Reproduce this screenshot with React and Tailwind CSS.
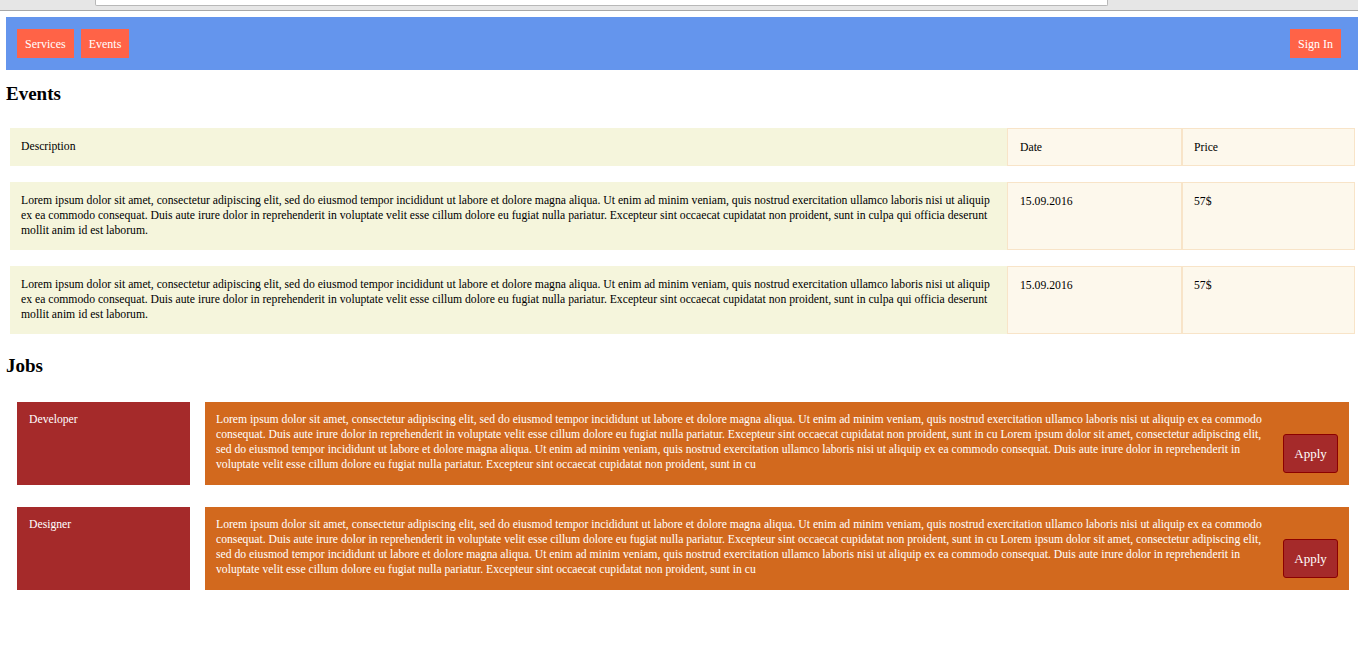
import React from 'react';

const LOREM =
    'Lorem ipsum dolor sit amet, consectetur adipiscing elit, sed do eiusmod tempor incididunt ut labore et dolore magna aliqua. Ut enim ad minim veniam, quis nostrud exercitation ullamco laboris nisi ut aliquip ex ea commodo consequat. Duis aute irure dolor in reprehenderit in voluptate velit esse cillum dolore eu fugiat nulla pariatur. Excepteur sint occaecat cupidatat non proident, sunt in culpa qui officia deserunt mollit anim id est laborum.';

const JOB_TEXT =
    'Lorem ipsum dolor sit amet, consectetur adipiscing elit, sed do eiusmod tempor incididunt ut labore et dolore magna aliqua. Ut enim ad minim veniam, quis nostrud exercitation ullamco laboris nisi ut aliquip ex ea commodo consequat. Duis aute irure dolor in reprehenderit in voluptate velit esse cillum dolore eu fugiat nulla pariatur. Excepteur sint occaecat cupidatat non proident, sunt in cu Lorem ipsum dolor sit amet, consectetur adipiscing elit, sed do eiusmod tempor incididunt ut labore et dolore magna aliqua. Ut enim ad minim veniam, quis nostrud exercitation ullamco laboris nisi ut aliquip ex ea commodo consequat. Duis aute irure dolor in reprehenderit in voluptate velit esse cillum dolore eu fugiat nulla pariatur. Excepteur sint occaecat cupidatat non proident, sunt in cu';

const events = [
    { id: 1, description: LOREM, date: '15.09.2016', price: '57$' },
    { id: 2, description: LOREM, date: '15.09.2016', price: '57$' },
];

const jobs = [
    { id: 1, title: 'Developer', text: JOB_TEXT },
    { id: 2, title: 'Designer', text: JOB_TEXT },
];

function NavButton({ children }) {
    return (
        <button className="bg-[#ff6347] text-white text-[12px] h-[29px] px-[8px] leading-none">
            {children}
        </button>
    );
}

function EventRow({ description, date, price }) {
    return (
        <div className="flex text-[11.7px] text-black leading-[15px]">
            <div className="flex-1 bg-[#f5f5dc] px-[10px] pt-[10px] pb-[11px] border border-[#f5f5dc]">
                {description}
            </div>
            <div className="w-[175px] bg-[#fdf8ec] border border-[#f8e4c8] px-[12px] pt-[11px] pb-[10px]">{date}</div>
            <div className="w-[173px] bg-[#fdf8ec] border border-[#f8e4c8] px-[11px] pt-[11px] pb-[10px]">{price}</div>
        </div>
    );
}

function JobRow({ title, text }) {
    return (
        <div className="flex gap-[15px] text-[11.7px] text-white leading-[15px]">
            <div className="w-[173px] bg-[#a52a2a] px-[12px] pt-[10px]">{title}</div>
            <div className="flex-1 bg-[#d2691e] flex items-start pl-[11px] pr-[11px] pt-[10px] pb-[12px]">
                <p className="flex-1 pr-[4px]">{text}</p>
                <button className="mt-[22px] w-[55px] h-[39px] shrink-0 bg-[#a52a2a] border border-[#8b0000] rounded-[3px] text-white text-[13px]">
                    Apply
                </button>
            </div>
        </div>
    );
}

export default function App() {
    return (
        <div className="min-h-[659px] bg-white font-['Liberation_Serif',_'Times_New_Roman',serif] text-black">
            <div className="h-[11px] bg-[#e6e6e6] border-b border-[#a8a8a8] flex">
                <div className="ml-[95px] w-[1013px] h-[6px] bg-white border border-t-0 border-[#b8b8b8] rounded-b-[2px]"></div>
            </div>
            <div className="pt-[6px] pl-[6px]">
                <header className="h-[53px] bg-[#6495ed] flex items-center justify-between pl-[11px] pr-[17px]">
                    <nav className="flex gap-[7px]">
                        <NavButton>Services</NavButton>
                        <NavButton>Events</NavButton>
                    </nav>
                    <NavButton>Sign In</NavButton>
                </header>

                <h3 className="text-[19px] font-bold leading-[22px] mt-[13px]">Events</h3>
                <div className="mt-[23px] ml-[4px] mr-[3px] flex flex-col gap-[16px]">
                    <EventRow description="Description" date="Date" price="Price" />
                    {events.map((e) => (
                        <EventRow key={e.id} {...e} />
                    ))}
                </div>

                <h3 className="text-[19px] font-bold leading-[22px] mt-[21px]">Jobs</h3>
                <div className="mt-[25px] ml-[11px] mr-[9px] flex flex-col gap-[22px]">
                    {jobs.map((j) => (
                        <JobRow key={j.id} {...j} />
                    ))}
                </div>
            </div>
        </div>
    );
}
